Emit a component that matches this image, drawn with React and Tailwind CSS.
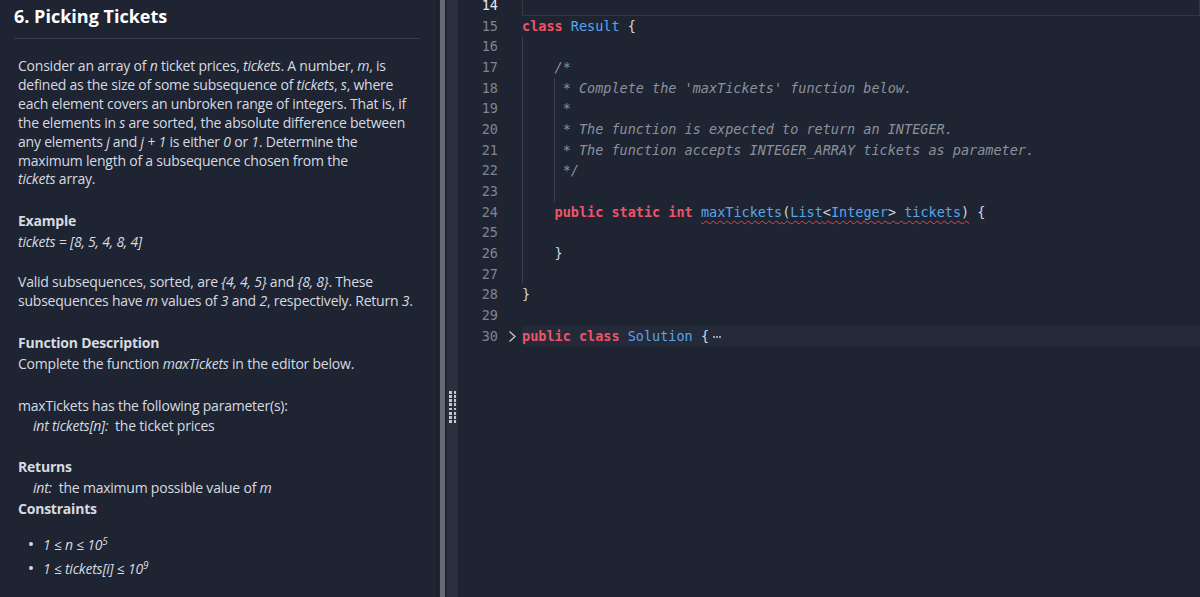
import React from "react";

const KW = "text-[#ef5466] font-bold";
const BL = "text-[#59a5ec]";
const CM = "text-[#8b919c] italic";
const PN = "text-[#d4d7dd]";

function Row({ n, current, folded, guides = [], highlight, children }) {
  return (
    <div className="flex h-[20.67px] leading-[20.67px]">
      <div className="relative w-[64px] shrink-0">
        <span
          className={`absolute right-[24px] top-0 ${current ? "text-[#e6e7ea]" : "text-[#7f8591]"}`}
        >
          {n}
        </span>
        {folded && (
          <svg
            className="absolute left-[50px] top-[4px]"
            width="9"
            height="13"
            viewBox="0 0 9 13"
            fill="none"
          >
            <path d="M1.5 1.5 L7 6.5 L1.5 11.5" stroke="#c5c9d0" strokeWidth="1.3" />
          </svg>
        )}
      </div>
      <div
        className={`relative flex-1 whitespace-pre ${
          current ? "border border-[#3d3237]" : ""
        } ${highlight ? "bg-[#242a39]" : ""}`}
      >
        {guides.map((g) => (
          <span
            key={g}
            className="absolute top-0 bottom-0 w-px bg-[#3a404d]"
            style={{ left: g }}
          />
        ))}
        {children}
      </div>
    </div>
  );
}

function Line({ className = "", children }) {
  return <div className={`h-[19px] leading-[19px] whitespace-nowrap ${className}`}>{children}</div>;
}

export default function App() {
  return (
    <div className="flex h-[597px] w-[1200px] overflow-hidden bg-[#1e2432]">
      {/* Left problem panel */}
      <div
        className="w-[437px] shrink-0 px-[14px] pt-[4px] text-[14px] text-[#d7dae0]"
        style={{ fontFamily: '"Open Sans", sans-serif' }}
      >
        <h1 className="h-[24px] text-[18px] font-bold leading-[24px] text-white">
          6. Picking Tickets
        </h1>
        <div className="mt-[10px] h-px w-[406px] bg-[#363c4a]" />
        <div className="pl-[4px] tracking-[-0.22px]">
          <div className="mt-[18px] leading-[18.9px] whitespace-nowrap">
            <div>
              Consider an array of <i>n</i> ticket prices, <i>tickets</i>. A number, <i>m</i>, is
            </div>
            <div>
              defined as the size of some subsequence of <i>tickets</i>, <i>s</i>, where
            </div>
            <div>each element covers an unbroken range of integers. That is, if</div>
            <div>
              the elements in <i>s</i> are sorted, the absolute difference between
            </div>
            <div>
              any elements <i>j</i> and <i>j + 1</i> is either <i>0</i> or <i>1</i>. Determine the
            </div>
            <div>maximum length of a subsequence chosen from the</div>
            <div>
              <i>tickets</i> array.
            </div>
          </div>

          <Line className="mt-[22px] font-bold">Example</Line>
          <Line className="mt-[2px]">
            <i>tickets = [8, 5, 4, 8, 4]</i>
          </Line>

          <div className="mt-[22px] leading-[18.7px] whitespace-nowrap">
            <div>
              Valid subsequences, sorted, are <i>{"{4, 4, 5}"}</i> and <i>{"{8, 8}"}</i>. These
            </div>
            <div>
              subsequences have <i>m</i> values of <i>3</i> and <i>2</i>, respectively. Return{" "}
              <i>3</i>.
            </div>
          </div>

          <Line className="mt-[22.5px] font-bold">Function Description</Line>
          <Line className="mt-[1.7px]">
            Complete the function <i>maxTickets</i> in the editor below.
          </Line>

          <Line className="mt-[23px]">maxTickets has the following parameter(s):</Line>
          <Line className="mt-[1.3px] pl-[15px]">
            <i>int tickets[n]:</i>&nbsp; the ticket prices
          </Line>

          <Line className="mt-[22px] font-bold">Returns</Line>
          <Line className="mt-[2px] pl-[15px]">
            <i>int:</i>&nbsp; the maximum possible value of <i>m</i>
          </Line>
          <Line className="mt-[1.4px] font-bold">Constraints</Line>

          <ul className="mt-[17px]">
            <li className="flex h-[19px] items-center leading-[19px]">
              <span className="ml-[11px] mr-[10px] h-[4px] w-[4px] rounded-full bg-[#d7dae0]" />
              <i>
                1 ≤ n ≤ 10<sup className="text-[10px]">5</sup>
              </i>
            </li>
            <li className="mt-[5px] flex h-[19px] items-center leading-[19px]">
              <span className="ml-[11px] mr-[10px] h-[4px] w-[4px] rounded-full bg-[#d7dae0]" />
              <i>
                1 ≤ tickets[i] ≤ 10<sup className="text-[10px]">9</sup>
              </i>
            </li>
          </ul>
        </div>
      </div>

      {/* Splitter */}
      <div className="w-px shrink-0 bg-[#181c27]" />
      <div className="w-[2px] shrink-0" />
      <div className="w-[5px] shrink-0 bg-[#646976]" />
      <div className="w-[2px] shrink-0" />
      <div className="flex w-[11px] shrink-0 justify-center bg-[#2a303e] pt-[391px]">
        <div className="grid h-[32px] grid-cols-2 gap-x-[2px] gap-y-[1.2px]">
          {Array.from({ length: 16 }).map((_, i) => (
            <span key={i} className="h-[2.8px] w-[2.8px] bg-[#c3c7cf]" />
          ))}
        </div>
      </div>

      {/* Editor */}
      <div
        className="flex-1 overflow-hidden text-[13.5px]"
        style={{ fontFamily: '"DejaVu Sans Mono", "Liberation Mono", monospace' }}
      >
        <div className="mt-[-5px]">
          <Row n={14} current />
          <Row n={15}>
            <span className={KW}>class</span> <span className={BL}>Result</span>{" "}
            <span className={PN}>{"{"}</span>
          </Row>
          <Row n={16} guides={[0]} />
          <Row n={17} guides={[0]}>
            <span className={CM}>{"    /*"}</span>
          </Row>
          <Row n={18} guides={[0, 32]}>
            <span className={CM}>{"     * Complete the 'maxTickets' function below."}</span>
          </Row>
          <Row n={19} guides={[0, 32]}>
            <span className={CM}>{"     *"}</span>
          </Row>
          <Row n={20} guides={[0, 32]}>
            <span className={CM}>{"     * The function is expected to return an INTEGER."}</span>
          </Row>
          <Row n={21} guides={[0, 32]}>
            <span className={CM}>
              {"     * The function accepts INTEGER_ARRAY tickets as parameter."}
            </span>
          </Row>
          <Row n={22} guides={[0, 32]}>
            <span className={CM}>{"     */"}</span>
          </Row>
          <Row n={23} guides={[0, 32]} />
          <Row n={24} guides={[0]}>
            {"    "}
            <span className={KW}>public</span> <span className={KW}>static</span>{" "}
            <span className={KW}>int</span>{" "}
            <span className="underline decoration-[#e5484d] decoration-wavy decoration-1 underline-offset-[3px]">
              <span className={BL}>maxTickets</span>
              <span className={PN}>(</span>
              <span className={BL}>List</span>
              <span className={PN}>{"<"}</span>
              <span className={BL}>Integer</span>
              <span className={PN}>{">"}</span> <span className={BL}>tickets</span>
              <span className={PN}>)</span>
            </span>{" "}
            <span className={PN}>{"{"}</span>
          </Row>
          <Row n={25} guides={[0]} />
          <Row n={26} guides={[0]}>
            <span className={PN}>{"    }"}</span>
          </Row>
          <Row n={27} guides={[0]} />
          <Row n={28}>
            <span className={PN}>{"}"}</span>
          </Row>
          <Row n={29} />
          <Row n={30} folded highlight>
            <span className={KW}>public</span> <span className={KW}>class</span>{" "}
            <span className={BL}>Solution</span> <span className={PN}>{"{"}</span>
            <span className="ml-[3px] inline-flex h-[8px] w-[10px] items-center justify-center gap-[1px] rounded-[1px] align-middle">
              <span className="h-[2px] w-[2px] bg-[#9aa0aa]" />
              <span className="h-[2px] w-[2px] bg-[#9aa0aa]" />
              <span className="h-[2px] w-[2px] bg-[#9aa0aa]" />
            </span>
          </Row>
        </div>
      </div>
    </div>
  );
}
